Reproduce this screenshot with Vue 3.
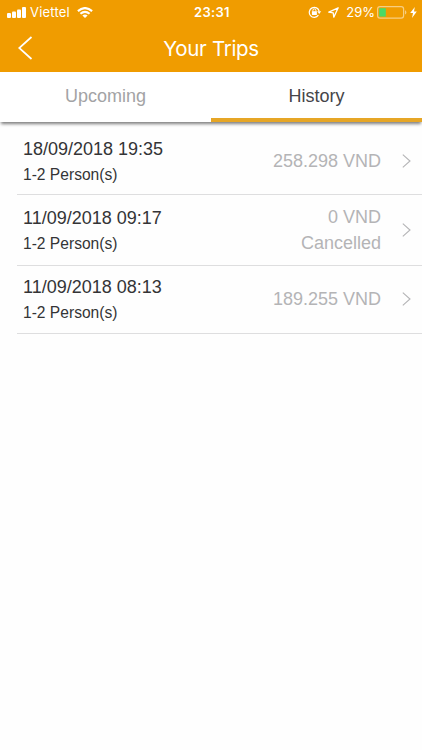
<!-- TripHistory.vue -->
<template>
  <div class="screen">
    <header class="header">
      <div class="status-bar">
        <div class="status-left">
          <svg class="signal" viewBox="0 0 19 11" fill="#fff">
            <rect x="0" y="6" width="4" height="5" rx="1" />
            <rect x="5" y="4.4" width="4" height="6.6" rx="1" />
            <rect x="10" y="2.4" width="4" height="8.6" rx="1" />
            <rect x="15" y="0" width="4" height="11" rx="1" />
          </svg>
          <span class="carrier">Viettel</span>
          <svg class="wifi" viewBox="0 0 16 11" fill="none" stroke="#fff" stroke-width="2.1">
            <path d="M0.9 4.1 Q8 -2 15.1 4.1" />
            <path d="M3.4 6.8 Q8 2.9 12.6 6.8" />
            <path d="M5.4 8.6 Q8 6.4 10.6 8.6 L8 11 Z" fill="#fff" stroke="none" />
          </svg>
        </div>
        <span class="clock">23:31</span>
        <div class="status-right">
          <svg class="lock" viewBox="0 0 14 12" fill="none" stroke="#fff">
            <path d="M10.4 9.2 A5 5 0 1 1 11.2 5.4" stroke-width="1.2" />
            <path d="M9.2 5.2 H13.2 L11.2 7.9 Z" fill="#fff" stroke="none" />
            <path d="M4.9 5.6 V4.4 A1.5 1.5 0 0 1 7.9 4.4 V5.6" stroke-width="1" />
            <rect x="3.9" y="5.2" width="5" height="3.7" rx="0.4" fill="#fff" stroke="none" />
          </svg>
          <svg class="location" viewBox="0 0 11 11" fill="none" stroke="#fff" stroke-width="1.3">
            <path d="M10.2 0.8 L0.8 5.2 L5.2 5.8 L5.8 10.2 Z" stroke-linejoin="round" />
          </svg>
          <span class="percent">29%</span>
          <svg class="battery" viewBox="0 0 30 13">
            <rect x="0.6" y="0.6" width="26" height="11.6" rx="2.4" fill="none" stroke="#fff" stroke-opacity="0.5" stroke-width="1.2" />
            <rect x="2.2" y="2.2" width="6.6" height="8.4" fill="#4cd964" />
            <path d="M28 4.2 Q29.4 4.8 29.4 6.4 Q29.4 8 28 8.6 Z" fill="#fff" fill-opacity="0.5" />
          </svg>
          <svg class="bolt" viewBox="0 0 7 11" fill="#fff">
            <path d="M4.8 0 L0.2 6.1 H3 L2 11 L6.8 4.5 H4 Z" />
          </svg>
        </div>
      </div>
      <div class="nav-bar">
        <svg class="back" viewBox="0 0 15 24" fill="none" stroke="#fff" stroke-width="1.7">
          <path d="M13.5 1 L1.2 12 L13.5 23" />
        </svg>
        <h1 class="title">Your Trips</h1>
      </div>
    </header>

    <nav class="tabs">
      <button
        v-for="tab in tabs"
        :key="tab"
        class="tab"
        :class="{ active: tab === activeTab }"
        @click="activeTab = tab"
      >
        {{ tab }}
      </button>
    </nav>

    <ul class="trips">
      <li v-for="trip in trips" :key="trip.date" class="trip">
        <div class="trip-info">
          <div class="trip-date">{{ trip.date }}</div>
          <div class="trip-people">{{ trip.people }}</div>
        </div>
        <div class="trip-price">
          <div>{{ trip.price }}</div>
          <div v-if="trip.status">{{ trip.status }}</div>
        </div>
        <svg class="chevron" viewBox="0 0 9 14" fill="none" stroke="#b4b4b6" stroke-width="1.1">
          <path d="M0.8 0.6 L8 7 L0.8 13.4" />
        </svg>
      </li>
    </ul>
  </div>
</template>

<script setup>
import { ref } from 'vue';

const tabs = ['Upcoming', 'History'];
const activeTab = ref('History');

const trips = [
  { date: '18/09/2018 19:35', people: '1-2 Person(s)', price: '258.298 VND' },
  { date: '11/09/2018 09:17', people: '1-2 Person(s)', price: '0 VND', status: 'Cancelled' },
  { date: '11/09/2018 08:13', people: '1-2 Person(s)', price: '189.255 VND' },
];
</script>

<style>
body {
  margin: 0;
  background: #fefefe;
}
</style>

<style scoped>
.screen {
  width: 422px;
  height: 750px;
  overflow: hidden;
  background: #fefefe;
  font-family: "Liberation Sans", Arial, sans-serif;
}

.header {
  height: 72px;
  background: #f09c00;
  color: #fff;
}

.status-bar {
  display: grid;
  grid-template-columns: 1fr auto 1fr;
  align-items: center;
  height: 24px;
  padding: 0 5px 0 7px;
  font-family: Inter, sans-serif;
  font-size: 13px;
}

.status-left, .status-right {
  display: flex;
  align-items: center;
}

.status-right {
  justify-content: flex-end;
}

.signal {
  width: 19px;
  height: 11px;
}

.carrier {
  margin-left: 4px;
  letter-spacing: 0.2px;
}

.wifi {
  width: 16px;
  height: 11px;
  margin-left: 7px;
}

.clock {
  font-weight: 600;
  letter-spacing: 0.3px;
}

.lock {
  width: 14px;
  height: 12px;
}

.location {
  width: 11px;
  height: 11px;
  margin-left: 6px;
}

.percent {
  margin-left: 7px;
}

.battery {
  width: 30px;
  height: 13px;
  margin-left: 2px;
}

.bolt {
  width: 7px;
  height: 11px;
  margin-left: 3px;
}

.nav-bar {
  display: grid;
  grid-template-columns: 40px 1fr 40px;
  align-items: center;
  height: 48px;
}

.back {
  width: 15px;
  height: 24px;
  margin-left: 18px;
}

.title {
  margin: 0;
  font-family: Inter, sans-serif;
  font-size: 20.5px;
  font-weight: 400;
  letter-spacing: -0.3px;
  text-align: center;
}

.tabs {
  display: flex;
  height: 50px;
  background: #fff;
  box-shadow: 0 3px 3px -1px rgba(0, 0, 0, 0.5);
}

.tab {
  flex: 1;
  padding: 0 0 2px;
  border: none;
  border-bottom: 0 solid #e6a626;
  background: none;
  color: #a3a3a5;
  font-family: inherit;
  font-size: 18px;
}

.tab.active {
  padding: 2px 0 0;
  border-bottom-width: 4px;
  color: #454549;
}

.trips {
  margin: 0;
  padding: 4px 0 0 17px;
  list-style: none;
}

.trip {
  display: flex;
  align-items: center;
  box-sizing: border-box;
  height: 68px;
  padding: 0 11px 2px 6px;
  border-bottom: 1px solid #dededf;
}

.trip:first-child {
  height: 69px;
  padding-top: 2px;
  padding-bottom: 0;
}

.trip:nth-child(2) {
  height: 71px;
  padding-bottom: 0;
}

.trip-info {
  flex: 1;
  padding-top: 1px;
  color: #343436;
}

.trip-date {
  font-size: 18px;
  line-height: 26px;
}

.trip-people {
  font-size: 15.6px;
  line-height: 25px;
}

.trip-price {
  color: #b4b4b6;
  font-size: 18px;
  line-height: 26px;
  text-align: right;
}

.chevron {
  width: 9px;
  height: 14px;
  margin-left: 21px;
}
</style>
